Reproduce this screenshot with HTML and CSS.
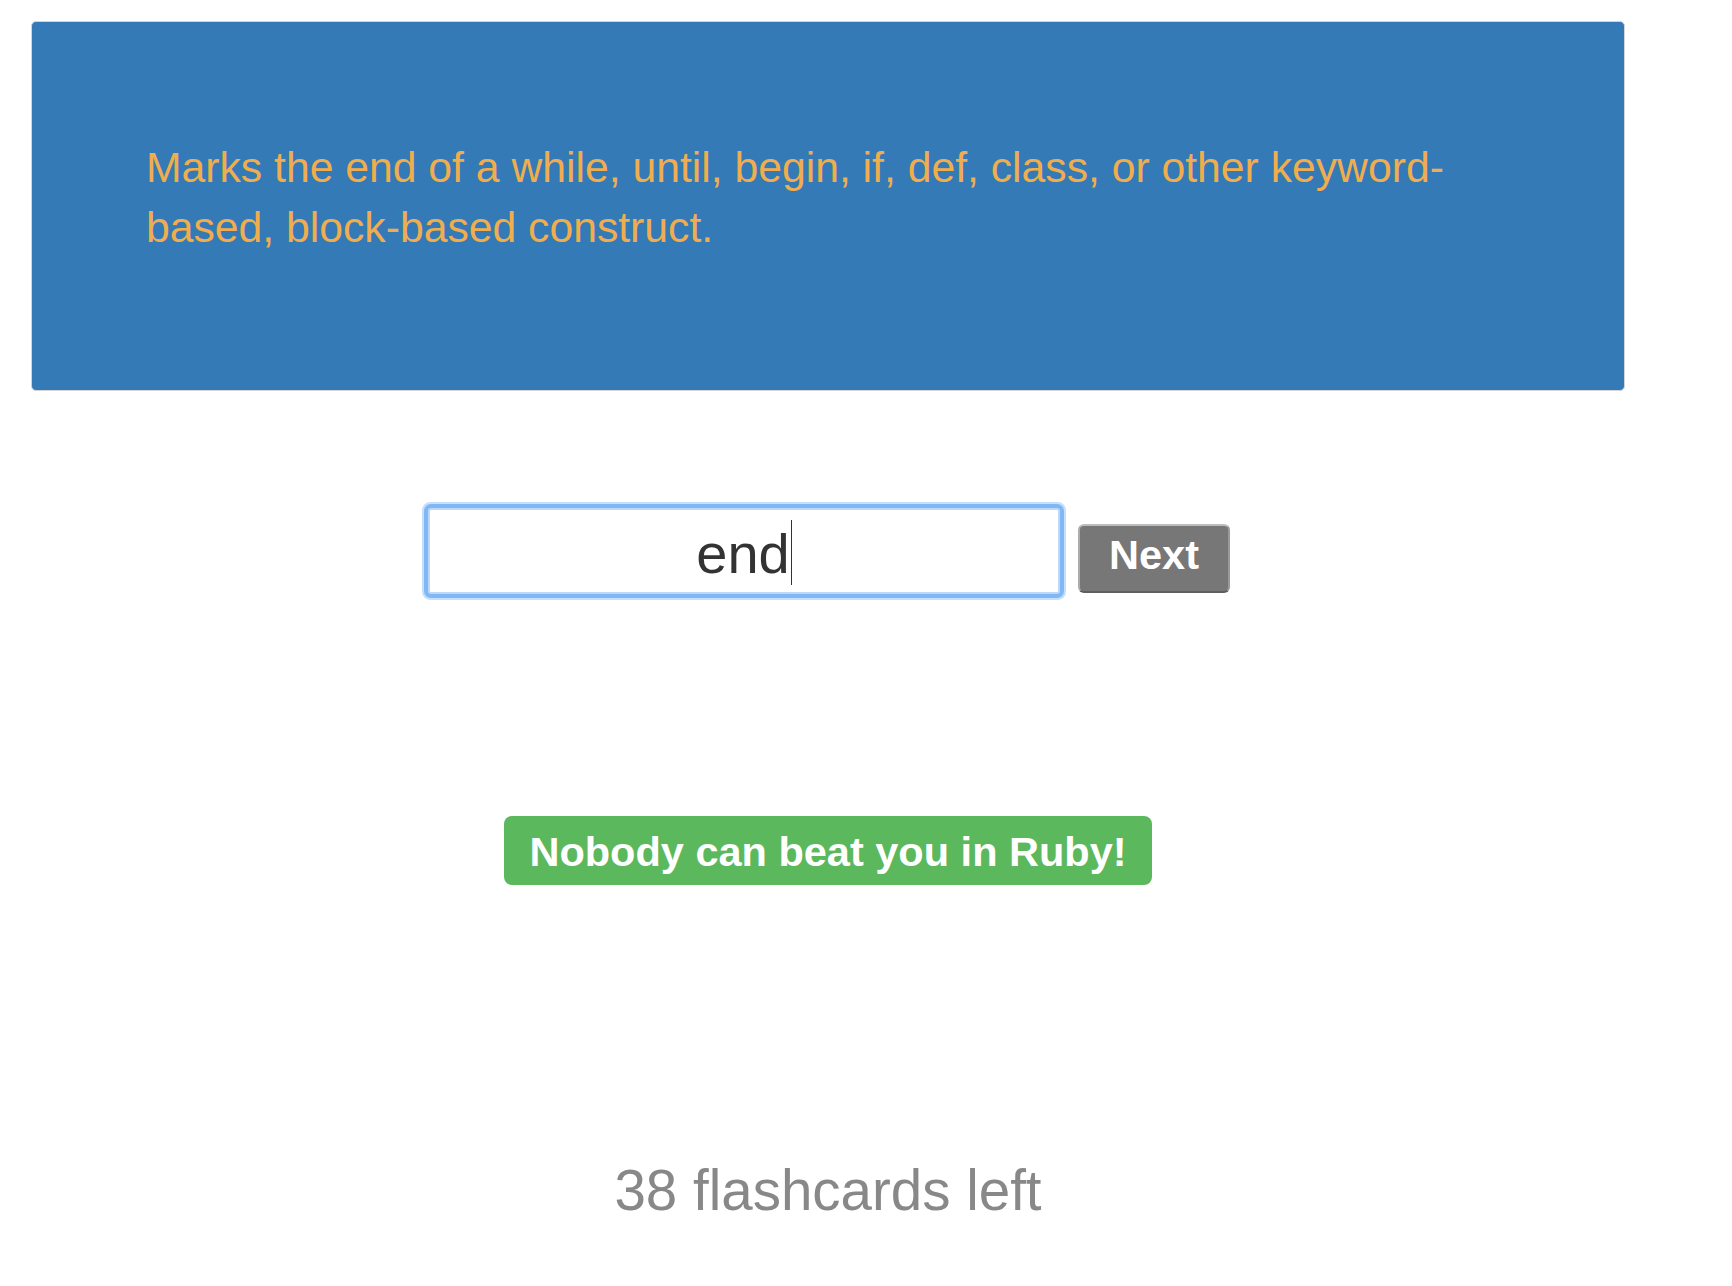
FILE: index.html
```html
<!DOCTYPE html>
<html lang="en">
<head>
<meta charset="utf-8">
<title>Flashcards</title>
<link rel="stylesheet" href="styles.css">
</head>
<body>
<main class="page">
  <section class="card">
    <p class="card-text">Marks the end of a while, until, begin, if, def, class, or other keyword-based, block-based construct.</p>
  </section>
  <form class="answer-row" onsubmit="return false">
    <div class="answer" role="textbox" aria-label="Answer"><span class="answer-text">end<span class="caret"></span></span></div>
    <button class="next-btn" type="button">Next</button>
  </form>
  <div class="result-row">
    <span class="result-label">Nobody can beat you in Ruby!</span>
  </div>
  <p class="count">38 flashcards left</p>
</main>
</body>
</html>
```

FILE: styles.css
```css
html, body {
  margin: 0;
  padding: 0;
  background: #ffffff;
}

body {
  font-family: "Liberation Sans", Arial, sans-serif;
}

.page {
  width: 1594px;
  padding: 21px 0 0 31px;
}

.card {
  background: #337ab7;
  border: 1px solid #d4d4d4;
  border-radius: 5px;
  padding: 115px 112px 133px 114px;
}

.card-text {
  margin: 0;
  color: #f0ad4e;
  font-size: 42.7px;
  line-height: 60px;
}

.answer-row {
  display: flex;
  justify-content: center;
  align-items: flex-start;
  gap: 18px;
  margin: 117px 0 0 2px;
}

.answer {
  box-sizing: border-box;
  width: 632px;
  height: 86px;
  border: 2px solid #bcd9f9;
  border-radius: 3px;
  box-shadow: 0 0 0 4px #80b7f4, 0 0 0 6px #c6e0fb;
  background: #fff;
  display: flex;
  align-items: center;
  justify-content: center;
  color: #333;
  font-size: 56px;
}

.answer-text {
  line-height: normal;
  white-space: nowrap;
  padding-top: 4px;
}

.caret {
  display: inline-block;
  width: 1px;
  height: 65px;
  margin-left: 1px;
  background: #333;
  vertical-align: -12px;
}

.next-btn {
  margin-top: 16px;
  font-family: "Liberation Sans", Arial, sans-serif;
  font-weight: bold;
  font-size: 41.5px;
  line-height: 1;
  color: #fff;
  background: #777777;
  border-style: solid;
  border-width: 2px;
  border-color: #bdbdbd #9a9a9a #5f5f5f #acacac;
  border-radius: 6px;
  padding: 8px 29px 15.5px;
  cursor: pointer;
}

.result-row {
  display: flex;
  justify-content: center;
  margin-top: 222px;
}

.result-label {
  display: inline-block;
  background: #5cb85c;
  color: #fff;
  font-weight: bold;
  font-size: 41.5px;
  line-height: 1;
  padding: 15px 25px 12.5px;
  border-radius: 8px;
  white-space: nowrap;
}

.count {
  margin: 273px 0 0 0;
  text-align: center;
  color: #888888;
  font-size: 56.5px;
}
```
